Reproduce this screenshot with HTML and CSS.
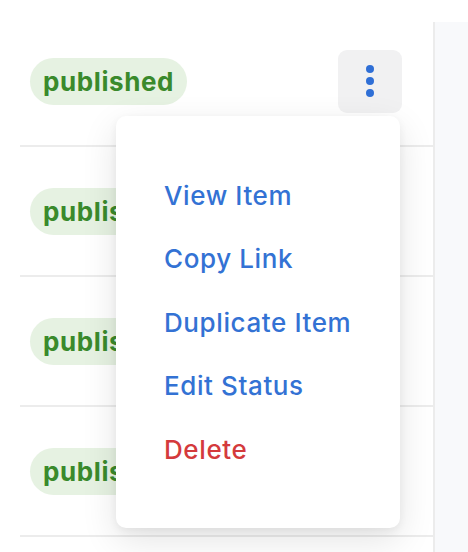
FILE: index.html
```html
<!DOCTYPE html>
<html lang="en">
<head>
<meta charset="utf-8">
<title>Items</title>
<link rel="stylesheet" href="styles.css">
</head>
<body>
<div class="layout">
  <main class="list">
    <div class="row">
      <span class="pill">published</span>
      <div class="actions">
        <button class="kebab" aria-label="More actions">
          <svg width="8" height="32" viewBox="0 0 8 32"><circle cx="4" cy="4" r="4"/><circle cx="4" cy="16" r="4"/><circle cx="4" cy="28" r="4"/></svg>
        </button>
        <ul class="menu">
          <li class="item">View Item</li>
          <li class="item">Copy Link</li>
          <li class="item">Duplicate Item</li>
          <li class="item">Edit Status</li>
          <li class="item danger">Delete</li>
        </ul>
      </div>
    </div>
    <div class="row"><span class="pill">published</span></div>
    <div class="row"><span class="pill">published</span></div>
    <div class="row"><span class="pill">published</span></div>
  </main>
  <aside class="panel"></aside>
</div>
</body>
</html>
```

FILE: styles.css
```css
* { box-sizing: border-box; }
html, body {
  margin: 0;
  padding: 0;
  background: #ffffff;
  font-family: Inter, "Noto Sans", "Liberation Sans", sans-serif;
  height: 100%;
  overflow: hidden;
}
.layout {
  display: flex;
  height: 552px;
}
.list {
  width: 433px;
  padding: 17px 0 0 20px;
  flex: none;
}
.row {
  height: 130px;
  border-bottom: 2px solid #ececec;
  display: flex;
  align-items: center;
  justify-content: space-between;
  padding: 0 31px 0 10px;
}
.pill {
  display: inline-flex;
  align-items: center;
  height: 47px;
  padding: 0 13px;
  border-radius: 24px;
  background: #e6f2e2;
  color: #3a8a2c;
  font-weight: 700;
  font-size: 26px;
  letter-spacing: 0.6px;
}
.actions {
  position: relative;
}
.kebab {
  width: 64px;
  height: 63px;
  border: none;
  border-radius: 9px;
  background: #f1f1f2;
  display: flex;
  align-items: center;
  justify-content: center;
  padding: 0;
}
.kebab svg { fill: #2f6fd6; display: block; }
.menu {
  position: absolute;
  top: calc(100% + 3px);
  right: 2px;
  width: 284px;
  margin: 0;
  padding: 48px 0 47px 48px;
  list-style: none;
  background: #ffffff;
  border-radius: 10px;
  box-shadow: 0 12px 36px rgba(0, 0, 0, 0.11), 0 3px 8px rgba(0, 0, 0, 0.06);
  z-index: 2;
}
.item {
  font-size: 26px;
  font-weight: 500;
  letter-spacing: 0.6px;
  line-height: 63.5px;
  height: 63.5px;
  color: #3372d4;
  white-space: nowrap;
}
.item.danger { color: #d43a3c; }
.panel {
  flex: 1;
  margin-top: 22px;
  background: #f8f9fb;
  border-left: 2px solid #ececec;
}
```
